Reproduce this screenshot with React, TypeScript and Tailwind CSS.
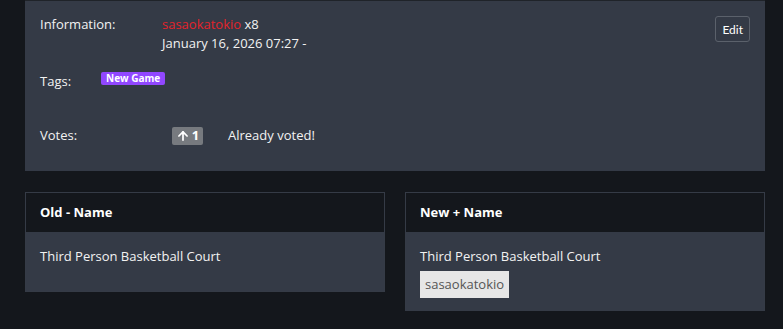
import { ArrowUp } from "lucide-react";

const NameCard = ({ title, children }: any) => (
  <div className="border border-[#353b46] bg-[#343a46] self-start">
    <div className="h-[39px] flex items-center px-[14px] bg-[#14171c] text-[13px] font-bold text-white">
      {title}
    </div>
    <div className="px-[14px] pt-[15px]">{children}</div>
  </div>
);

export default function App() {
  return (
    <div
      className="min-h-screen bg-[#14171c] pl-[25px] pr-[18px] text-[13px] leading-[19px] text-[#f2f2f2]"
      style={{ fontFamily: '"Open Sans", "Noto Sans", sans-serif' }}
    >
      {/* info panel */}
      <section className="bg-[#343a46] border-t border-[#1f2329] pt-[14px] pb-[26px] px-[15px]">
        <div className="flex justify-between items-start">
          <div className="flex">
            <div className="w-[122px]">Information:</div>
            <div>
              <div>
                <span className="text-[#e3232b]">sasaokatokio</span> x8
              </div>
              <div>January 16, 2026 07:27 -</div>
            </div>
          </div>
          <button
            className="mt-[1px] h-[26px] px-[6px] border border-[#5b616b] rounded-[3px] text-[12px] text-white"
            style={{ fontFamily: "Lato, sans-serif" }}
          >
            Edit
          </button>
        </div>

        <div className="flex items-center mt-[19px]">
          <div className="w-[61px]">Tags:</div>
          <span className="h-[13px] px-[5px] rounded-[2px] bg-[#9147ff] text-white text-[10px] leading-[13px] font-bold -mt-[6px]">
            New Game
          </span>
        </div>

        <div className="flex items-center mt-[35px]">
          <div className="w-[132px]">Votes:</div>
          <span className="h-[18px] w-[31px] rounded-[2px] bg-[#777a7f] flex items-center justify-center gap-[2px] text-white font-bold text-[13px]">
            <ArrowUp size={14} strokeWidth={3} />1
          </span>
          <span className="ml-[25px]">Already voted!</span>
        </div>
      </section>

      {/* name diff */}
      <div className="grid grid-cols-2 gap-[20px] mt-[21px]">
        <NameCard title="Old - Name">
          <div className="pb-[25px]">Third Person Basketball Court</div>
        </NameCard>
        <NameCard title="New + Name">
          <div>Third Person Basketball Court</div>
          <div className="mt-[5px] mb-[12px] inline-block h-[27px] px-[5px] bg-[#e6e6e6] text-[#555] text-[13px] leading-[27px]">
            sasaokatokio
          </div>
        </NameCard>
      </div>
    </div>
  );
}
